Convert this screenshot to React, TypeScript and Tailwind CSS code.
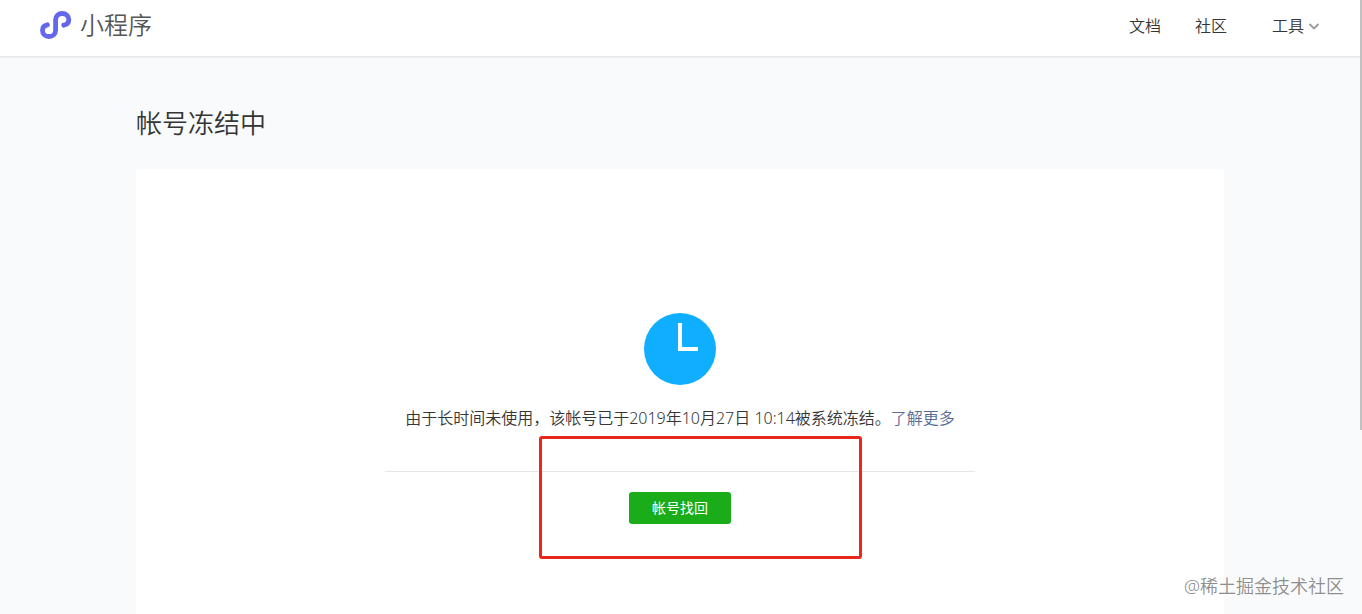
import React from 'react';

const LogoIcon: React.FC = () => (
  <svg className="h-7 w-8" viewBox="0 0 32 28" fill="none" aria-hidden="true">
    <path
      d="M23.8 14.2 C26.8 13.6 28.8 11.8 28.8 8.8 C28.8 5.2 26 2.5 22.2 2.5 C18.4 2.5 15.6 5.2 15.6 8.8 V19.2 C15.6 22.8 12.8 25.5 9 25.5 C5.2 25.5 2.5 22.8 2.5 19.2 C2.5 16.2 4.4 14.4 7.4 13.8"
      stroke="#6467ea"
      strokeWidth="4.8"
      strokeLinecap="round"
    />
  </svg>
);

const ChevronIcon: React.FC = () => (
  <svg className="h-2 w-3" viewBox="0 0 12 8" fill="none" aria-hidden="true">
    <path d="M1.5 2 L6 6.5 L10.5 2" stroke="#9a9a9a" strokeWidth="1.8" />
  </svg>
);

const ClockIcon: React.FC = () => (
  <svg className="h-[72px] w-[72px]" viewBox="0 0 72 72" aria-hidden="true">
    <circle cx="36" cy="36" r="36" fill="#10aeff" />
    <path d="M36 10 V36 H54" fill="none" stroke="#fff" strokeWidth="4" />
  </svg>
);

const Header: React.FC = () => (
  <header className="flex h-[57px] items-center justify-between border-b border-[#e4e8e9] bg-white px-10 pb-1 shadow-xs">
    <a href="#" className="flex items-center gap-2 pb-0.5">
      <LogoIcon />
      <span className="text-2xl leading-8 text-[#555]">小程序</span>
    </a>
    <nav className="flex items-center text-base text-[#353535]">
      <a href="#" className="mr-[34px]">文档</a>
      <a href="#" className="mr-[45px]">社区</a>
      <button type="button" className="flex items-center gap-1">
        工具
        <ChevronIcon />
      </button>
    </nav>
  </header>
);

const App: React.FC = () => {
  return (
    <div className="flex h-screen overflow-hidden bg-white font-['Noto_Sans','Noto_Sans_CJK_SC',sans-serif] font-[350]">
      <div className="flex min-w-0 flex-1 flex-col bg-[#f8fafc]">
        <Header />
        <main className="mx-auto flex w-4/5 flex-1 flex-col pt-12">
          <h1 className="text-[26px] leading-9 font-[350] text-[#353535]">帐号冻结中</h1>
          <section className="mt-7 flex flex-1 flex-col items-center rounded-t bg-white pt-36">
            <ClockIcon />
            <p className="mt-5 text-base leading-[26px] text-[#353535]">
              由于长时间未使用，该帐号已于2019年10月27日 10:14被系统冻结。
              <a href="#" className="text-[#576b95]">了解更多</a>
            </p>
            <div className="relative mt-10 flex w-[590px] justify-center border-t border-[#e7e7eb] pt-5">
              <button
                type="button"
                className="h-8 rounded-[3px] bg-[#1aad19] px-[23px] text-sm font-normal text-white"
              >
                帐号找回
              </button>
              <div className="pointer-events-none absolute -top-9 left-[154px] h-[123px] w-[323px] rounded-[3px] border-3 border-[#e8281b]" />
            </div>
          </section>
        </main>
      </div>

      {/* scrollbar */}
      <div className="w-0.5 bg-[#fafafa]">
        <div className="h-[70%] bg-[#c1c1c1]" />
      </div>

      <div className="absolute right-[18px] bottom-4 text-lg leading-6 text-[#8e8e8e] [text-shadow:1px_1px_0_#fff]">
        @稀土掘金技术社区
      </div>
    </div>
  );
};

export default App;
